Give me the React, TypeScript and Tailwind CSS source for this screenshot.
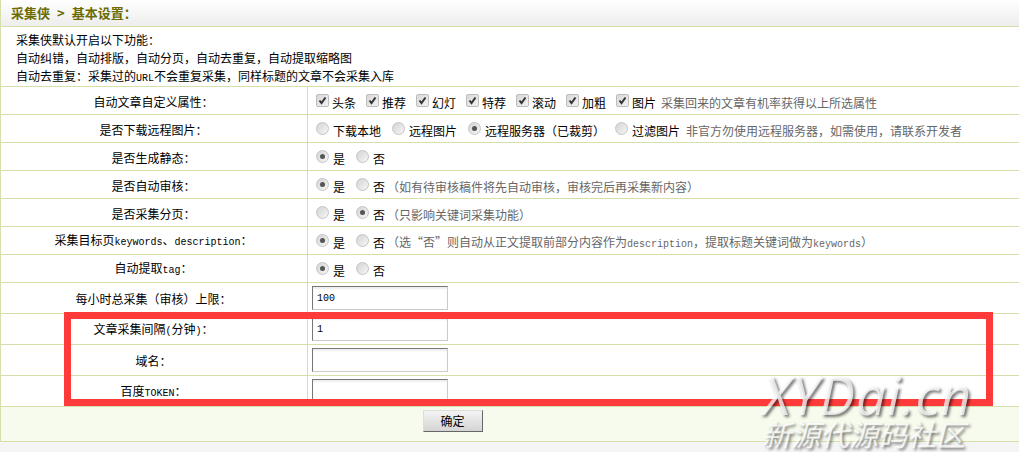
const line = 'border-b border-[#d4dfa9]';

// latin runs sit at half the CJK width in the original bitmap font
function M({ children }: { children: React.ReactNode }) {
  return <span className="font-['Liberation_Mono',monospace] text-[10px]">{children}</span>;
}

function Check({ label }: { label: string }) {
  return (
    <span className="flex items-center">
      <span className="flex h-[13px] w-[13px] items-center justify-center rounded-[2px] border border-[#bdbdbd] bg-gradient-to-br from-[#d8d8d8] to-[#f2f2f2]">
        <svg viewBox="0 0 11 11" className="h-[11px] w-[11px]">
          <path d="M2.5 5.5 L4.5 8 L8.5 2.5" fill="none" stroke="#333" strokeWidth="2" />
        </svg>
      </span>
      <span className="ml-[3px] mt-[5px] text-black">{label}</span>
    </span>
  );
}

function Radio({ label, on, gap = 'mr-[11px]' }: { label: string; on?: boolean; gap?: string }) {
  return (
    <span className={`flex items-center ${gap}`}>
      <span className="flex h-[13px] w-[13px] items-center justify-center rounded-full border border-[#c4c4c4] bg-gradient-to-br from-[#d4d4d4] to-[#f6f6f6]">
        {on && <span className="h-[5px] w-[5px] rounded-full bg-[#555]" />}
      </span>
      <span className="ml-[4px] mt-[5px] text-black">{label}</span>
    </span>
  );
}

function Row({ label, h = 'h-[28px]', children }: { label: React.ReactNode; h?: string; children: React.ReactNode }) {
  return (
    <div className={`grid grid-cols-[307px_1fr] ${h} ${line}`}>
      <div className="flex items-center justify-center border-r border-[#d4dfa9] pr-px pt-[2px]">
        <span>{label}</span>
      </div>
      <div className="flex items-center pl-[8px]">{children}</div>
    </div>
  );
}

function TextBox({ value }: { value?: string }) {
  return (
    <div className="-ml-[4px] flex h-[24px] w-[136px] items-center border border-b-[#ccc] border-l-[#777] border-r-[#ccc] border-t-[#777] bg-white pl-[4px] pt-[2px] shadow-[inset_0_2px_2px_#eee]">
      {value && <M>{value}</M>}
    </div>
  );
}

function Hint({ children, className = 'ml-[5px]' }: { children: React.ReactNode; className?: string }) {
  return <span className={`mt-[5px] text-[#666] ${className}`}>{children}</span>;
}

export default function App() {
  return (
    <div className="relative h-[452px] w-[1019px] overflow-hidden bg-[#f5f5f5] font-['Noto_Sans_CJK_SC',sans-serif] text-[12px] leading-[18px] text-black">
      <div className="border-l border-[#d4dfa9] bg-white">
        <div className={`flex h-[27px] items-center bg-gradient-to-b from-white to-[#ededed] pl-[10px] text-[13px] font-bold text-[#6b6b00] ${line}`}>
          <span>采集侠</span>
          <span className="mx-[7px]">&gt;</span>
          <span>基本设置：</span>
        </div>
        <div className={`h-[60px] pl-[15px] pt-[4px] ${line}`}>
          <p>采集侠默认开启以下功能：</p>
          <p>自动纠错，自动排版，自动分页，自动去重复，自动提取缩略图</p>
          <p>
            自动去重复：采集过的<M>URL</M>不会重复采集，同样标题的文章不会采集入库
          </p>
        </div>

        <Row label="自动文章自定义属性：">
          <div className="flex gap-[10px]">
            {['头条', '推荐', '幻灯', '特荐', '滚动', '加粗', '图片'].map((t) => (
              <Check key={t} label={t} />
            ))}
          </div>
          <Hint>采集回来的文章有机率获得以上所选属性</Hint>
        </Row>
        <Row label="是否下载远程图片：">
          <Radio label="下载本地" />
          <Radio label="远程图片" />
          <Radio label="远程服务器（已裁剪）" on gap="mr-[10px]" />
          <Radio label="过滤图片" gap="mr-[6px]" />
          <Hint className="">非官方勿使用远程服务器，如需使用，请联系开发者</Hint>
        </Row>
        <Row label="是否生成静态：">
          <Radio label="是" on />
          <Radio label="否" />
        </Row>
        <Row label="是否自动审核：">
          <Radio label="是" on />
          <Radio label="否" gap="mr-[2px]" />
          <Hint className="">（如有待审核稿件将先自动审核，审核完后再采集新内容）</Hint>
        </Row>
        <Row label="是否采集分页：">
          <Radio label="是" />
          <Radio label="否" on gap="mr-[2px]" />
          <Hint className="">（只影响关键词采集功能）</Hint>
        </Row>
        <Row label={<>采集目标页<M>keywords</M>、<M>description</M>：</>}>
          <Radio label="是" on />
          <Radio label="否" gap="mr-[2px]" />
          <Hint className="">
            （选“否”则自动从正文提取前部分内容作为<M>description</M>，提取标题关键词做为<M>keywords</M>）
          </Hint>
        </Row>
        <Row label={<>自动提取<M>tag</M>：</>}>
          <Radio label="是" on />
          <Radio label="否" />
        </Row>
        <Row label="每小时总采集（审核）上限：" h="h-[31px]">
          <TextBox value="100" />
        </Row>
        <Row label={<>文章采集间隔<M>(</M>分钟<M>)</M>：</>} h="h-[31px]">
          <TextBox value="1" />
        </Row>
        <Row label="域名：" h="h-[31px]">
          <TextBox />
        </Row>
        <Row label={<>百度<M>TOKEN</M>：</>} h="h-[31px]">
          <TextBox />
        </Row>

        <div className={`flex h-[35px] justify-center bg-[#f7fbee] pr-[115px] pt-[3px] ${line}`}>
          <div className="flex h-[22px] w-[60px] items-center justify-center border border-b-[#666] border-l-[#ddd] border-r-[#666] border-t-[#ddd] bg-gradient-to-b from-[#f4f4f4] to-[#d4d4d4]">
            确定
          </div>
        </div>
      </div>

      {/* red marker drawn over the screenshot */}
      <div className="absolute left-[64px] top-[312px] h-[94px] w-[929px] border-[7px] border-[#ff3a3a]" />

      {/* watermark */}
      <div className="absolute left-[763px] top-[375px] font-['Open_Sans',sans-serif] text-[53px] italic leading-[40px] tracking-[1px] text-white/75 [text-shadow:2px_2px_3px_rgba(0,0,0,0.55)]">
        XYDai.cn
      </div>
      <div className="absolute left-[762px] top-[416px] text-[29px] italic leading-[34px] text-white/80 [text-shadow:2px_2px_3px_rgba(0,0,0,0.55)]">
        新源代源码社区
      </div>
    </div>
  );
}
